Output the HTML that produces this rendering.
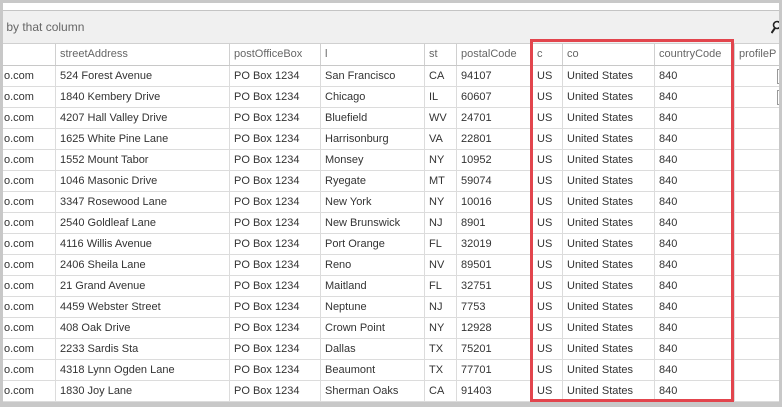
<!DOCTYPE html><html><head><style>
body{margin:0;width:782px;height:407px;overflow:hidden;background:#c8c8c8;font-family:"Liberation Sans",sans-serif;font-size:11px;color:#333;position:relative}
.in{position:absolute;left:3px;top:3px;width:776px;height:399px;background:#fff;overflow:hidden}
.grp{position:absolute;left:0;top:7px;width:776px;height:32px;background:#f0f0f0;border-top:1px solid #c4c4c4;border-bottom:1px solid #d0d0d0;color:#666;font-size:12px;line-height:32px}
.hdr{position:absolute;left:0;top:40px;height:22px;width:776px;border-bottom:1px solid #c8c8c8;color:#666}
.row{position:relative;width:776px;height:20px;border-bottom:1px solid #dcdcdc}
.c{position:absolute;top:0;height:100%;line-height:21px;padding-left:4px;border-left:1px solid #dcdcdc;white-space:nowrap;overflow:hidden;box-sizing:border-box}
.c0{left:-3px;width:55px;border-left:none}
.c1{left:52px;width:174px}.c2{left:226px;width:91px}.c3{left:317px;width:104px}.c4{left:421px;width:32px}.c5{left:453px;width:76px}.c6{left:529px;width:30px}.c7{left:559px;width:92px}.c8{left:651px;width:80px}.c9{left:731px;width:50px}
.hdr .c{line-height:22px;border-left:1px solid #d0d0d0}
.rows{position:absolute;left:0;top:63px}
.cb{position:absolute;left:774px;top:3px;width:6px;height:13px;border:1px solid #999;background:#fff}
.red{position:absolute;left:527px;top:36px;width:198px;height:357px;border:3px solid #e2454d}
</style></head><body><div class="in">
<div class="grp">&nbsp;by that column<svg style="position:absolute;left:768px;top:9px" width="10" height="14" viewBox="0 0 10 14"><circle cx="6" cy="5" r="3.5" fill="none" stroke="#222" stroke-width="1.6"/><path d="M4 8 L0.5 13" stroke="#222" stroke-width="2"/></svg></div>
<div class="hdr">
<div class="c c1">streetAddress</div><div class="c c2">postOfficeBox</div><div class="c c3">l</div><div class="c c4">st</div><div class="c c5">postalCode</div><div class="c c6">c</div><div class="c c7">co</div><div class="c c8">countryCode</div><div class="c c9">profileP</div>
</div>
<div class="rows">
<div class="row"><div class="c c0">o.com</div><div class="c c1">524 Forest Avenue</div><div class="c c2">PO Box 1234</div><div class="c c3">San Francisco</div><div class="c c4">CA</div><div class="c c5">94107</div><div class="c c6">US</div><div class="c c7">United States</div><div class="c c8">840</div><div class="c c9"></div><div class="cb"></div></div>
<div class="row"><div class="c c0">o.com</div><div class="c c1">1840 Kembery Drive</div><div class="c c2">PO Box 1234</div><div class="c c3">Chicago</div><div class="c c4">IL</div><div class="c c5">60607</div><div class="c c6">US</div><div class="c c7">United States</div><div class="c c8">840</div><div class="c c9"></div><div class="cb"></div></div>
<div class="row"><div class="c c0">o.com</div><div class="c c1">4207 Hall Valley Drive</div><div class="c c2">PO Box 1234</div><div class="c c3">Bluefield</div><div class="c c4">WV</div><div class="c c5">24701</div><div class="c c6">US</div><div class="c c7">United States</div><div class="c c8">840</div><div class="c c9"></div></div>
<div class="row"><div class="c c0">o.com</div><div class="c c1">1625 White Pine Lane</div><div class="c c2">PO Box 1234</div><div class="c c3">Harrisonburg</div><div class="c c4">VA</div><div class="c c5">22801</div><div class="c c6">US</div><div class="c c7">United States</div><div class="c c8">840</div><div class="c c9"></div></div>
<div class="row"><div class="c c0">o.com</div><div class="c c1">1552 Mount Tabor</div><div class="c c2">PO Box 1234</div><div class="c c3">Monsey</div><div class="c c4">NY</div><div class="c c5">10952</div><div class="c c6">US</div><div class="c c7">United States</div><div class="c c8">840</div><div class="c c9"></div></div>
<div class="row"><div class="c c0">o.com</div><div class="c c1">1046 Masonic Drive</div><div class="c c2">PO Box 1234</div><div class="c c3">Ryegate</div><div class="c c4">MT</div><div class="c c5">59074</div><div class="c c6">US</div><div class="c c7">United States</div><div class="c c8">840</div><div class="c c9"></div></div>
<div class="row"><div class="c c0">o.com</div><div class="c c1">3347 Rosewood Lane</div><div class="c c2">PO Box 1234</div><div class="c c3">New York</div><div class="c c4">NY</div><div class="c c5">10016</div><div class="c c6">US</div><div class="c c7">United States</div><div class="c c8">840</div><div class="c c9"></div></div>
<div class="row"><div class="c c0">o.com</div><div class="c c1">2540 Goldleaf Lane</div><div class="c c2">PO Box 1234</div><div class="c c3">New Brunswick</div><div class="c c4">NJ</div><div class="c c5">8901</div><div class="c c6">US</div><div class="c c7">United States</div><div class="c c8">840</div><div class="c c9"></div></div>
<div class="row"><div class="c c0">o.com</div><div class="c c1">4116 Willis Avenue</div><div class="c c2">PO Box 1234</div><div class="c c3">Port Orange</div><div class="c c4">FL</div><div class="c c5">32019</div><div class="c c6">US</div><div class="c c7">United States</div><div class="c c8">840</div><div class="c c9"></div></div>
<div class="row"><div class="c c0">o.com</div><div class="c c1">2406 Sheila Lane</div><div class="c c2">PO Box 1234</div><div class="c c3">Reno</div><div class="c c4">NV</div><div class="c c5">89501</div><div class="c c6">US</div><div class="c c7">United States</div><div class="c c8">840</div><div class="c c9"></div></div>
<div class="row"><div class="c c0">o.com</div><div class="c c1">21 Grand Avenue</div><div class="c c2">PO Box 1234</div><div class="c c3">Maitland</div><div class="c c4">FL</div><div class="c c5">32751</div><div class="c c6">US</div><div class="c c7">United States</div><div class="c c8">840</div><div class="c c9"></div></div>
<div class="row"><div class="c c0">o.com</div><div class="c c1">4459 Webster Street</div><div class="c c2">PO Box 1234</div><div class="c c3">Neptune</div><div class="c c4">NJ</div><div class="c c5">7753</div><div class="c c6">US</div><div class="c c7">United States</div><div class="c c8">840</div><div class="c c9"></div></div>
<div class="row"><div class="c c0">o.com</div><div class="c c1">408 Oak Drive</div><div class="c c2">PO Box 1234</div><div class="c c3">Crown Point</div><div class="c c4">NY</div><div class="c c5">12928</div><div class="c c6">US</div><div class="c c7">United States</div><div class="c c8">840</div><div class="c c9"></div></div>
<div class="row"><div class="c c0">o.com</div><div class="c c1">2233 Sardis Sta</div><div class="c c2">PO Box 1234</div><div class="c c3">Dallas</div><div class="c c4">TX</div><div class="c c5">75201</div><div class="c c6">US</div><div class="c c7">United States</div><div class="c c8">840</div><div class="c c9"></div></div>
<div class="row"><div class="c c0">o.com</div><div class="c c1">4318 Lynn Ogden Lane</div><div class="c c2">PO Box 1234</div><div class="c c3">Beaumont</div><div class="c c4">TX</div><div class="c c5">77701</div><div class="c c6">US</div><div class="c c7">United States</div><div class="c c8">840</div><div class="c c9"></div></div>
<div class="row"><div class="c c0">o.com</div><div class="c c1">1830 Joy Lane</div><div class="c c2">PO Box 1234</div><div class="c c3">Sherman Oaks</div><div class="c c4">CA</div><div class="c c5">91403</div><div class="c c6">US</div><div class="c c7">United States</div><div class="c c8">840</div><div class="c c9"></div></div>
<div class="row"><div class="c c0"></div><div class="c c1"></div><div class="c c2"></div><div class="c c3"></div><div class="c c4"></div><div class="c c5"></div><div class="c c6"></div><div class="c c7"></div><div class="c c8"></div><div class="c c9"></div></div>
</div>
<div class="red"></div>
</div>
</body></html>
